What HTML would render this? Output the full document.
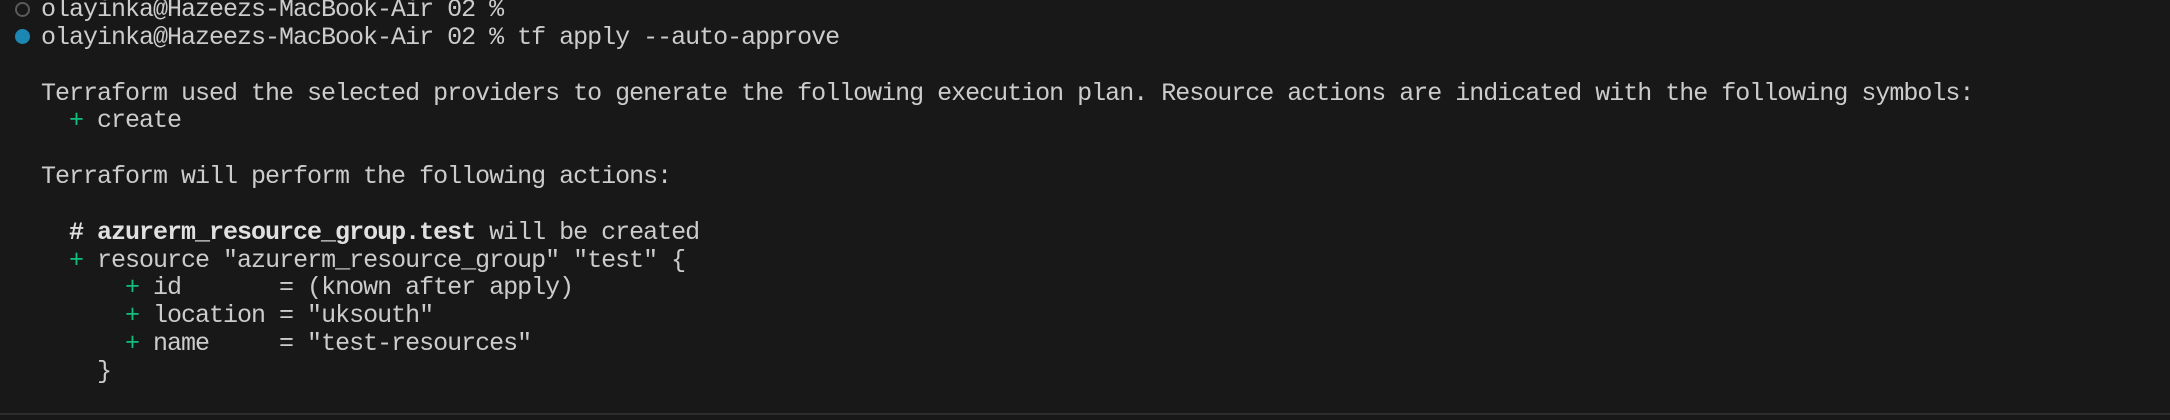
<!DOCTYPE html>
<html><head><meta charset="utf-8"><style>
html,body{margin:0;padding:0;background:#181818;width:2170px;height:420px;overflow:hidden;position:relative}
.t{position:absolute;left:41px;top:-4px;font-family:"Liberation Mono","DejaVu Sans Mono",monospace;font-size:25px;letter-spacing:-1px;line-height:27.85px;color:#cccccc;white-space:pre;margin:0}
.g{color:#10c07f}
b{color:#e0e0e0}
.c1{position:absolute;left:15px;top:2px;width:11px;height:11px;border:2px solid #5a5a5a;border-radius:50%}
.c2{position:absolute;left:15px;top:29px;width:15px;height:15px;background:#1c87b3;border-radius:50%}
.bl{position:absolute;left:0;top:413px;width:2170px;height:2px;background:#2c2c2c}
</style></head><body>
<div class="c1"></div><div class="c2"></div>
<pre class="t">olayinka@Hazeezs-MacBook-Air 02 %
olayinka@Hazeezs-MacBook-Air 02 % tf apply --auto-approve

Terraform used the selected providers to generate the following execution plan. Resource actions are indicated with the following symbols:
  <span class="g">+</span> create

Terraform will perform the following actions:

  <b># azurerm_resource_group.test</b> will be created
  <span class="g">+</span> resource "azurerm_resource_group" "test" {
      <span class="g">+</span> id       = (known after apply)
      <span class="g">+</span> location = "uksouth"
      <span class="g">+</span> name     = "test-resources"
    }</pre>
<div class="bl"></div>
</body></html>
